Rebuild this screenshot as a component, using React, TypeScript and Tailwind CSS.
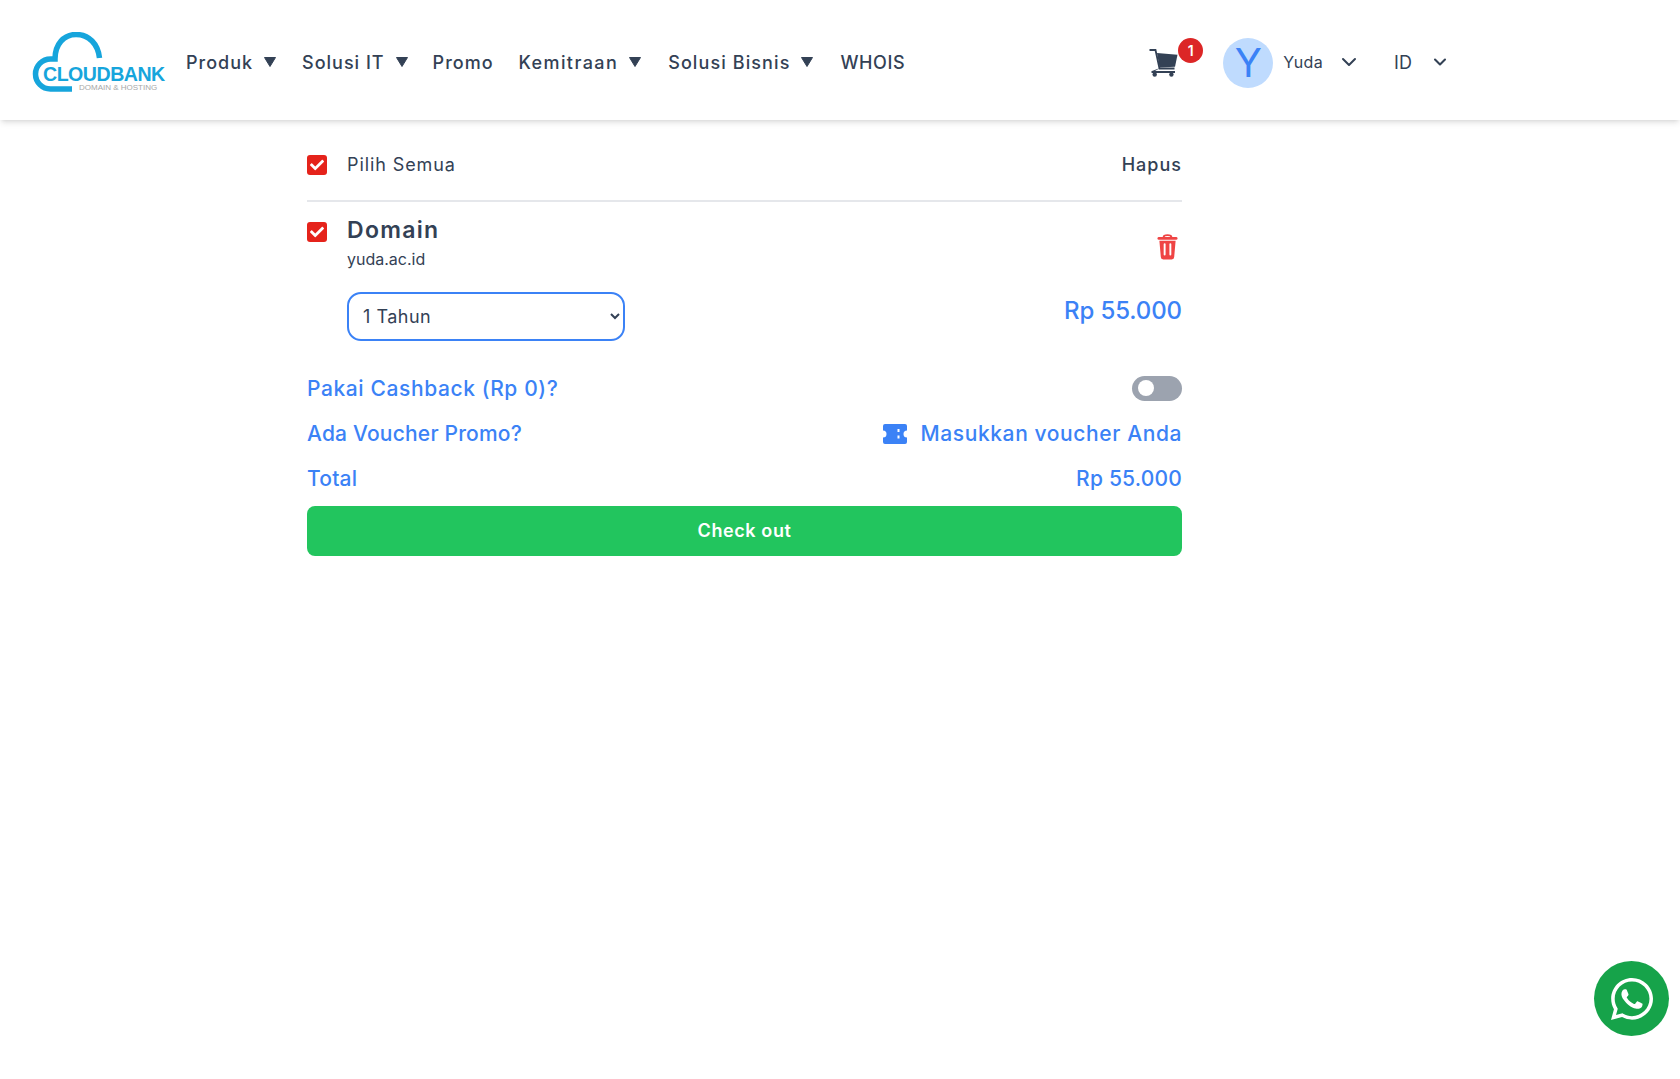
import { ChevronDown } from 'lucide-react';
import { FaWhatsapp, FaCheck } from 'react-icons/fa';

const navItems = [
  { label: 'Produk', caret: true, cls: 'tracking-[1px]' },
  { label: 'Solusi IT', caret: true, cls: 'ml-[26px] tracking-[1px]' },
  { label: 'Promo', caret: false, cls: 'ml-[25px] tracking-[1px]' },
  { label: 'Kemitraan', caret: true, cls: 'ml-[25px] tracking-[1.4px]' },
  { label: 'Solusi Bisnis', caret: true, cls: 'ml-[27px] tracking-[1.1px]' },
  { label: 'WHOIS', caret: false, cls: 'ml-[27px] tracking-[0.6px]' },
];

function Logo() {
  return (
    <div className="relative w-[134px] h-[60px] shrink-0">
      <svg viewBox="0 0 134 60" className="absolute inset-0 w-full h-full" fill="none">
        <path
          d="M40 57 H18.5 A15 15 0 0 1 18.5 27 H23 C23 12 32 2.5 44 2.5 C57 2.5 66 12 67.5 26"
          stroke="#16a5dc"
          strokeWidth="5.5"
        />
      </svg>
      <span className="absolute left-[11px] top-[31px] text-[19.6px] leading-[22px] font-bold text-[#16a5dc] tracking-[-0.5px] font-['Liberation_Sans',sans-serif] whitespace-nowrap">
        CLOUDBANK
      </span>
      <span className="absolute left-[47px] top-[51px] text-[8px] leading-[10px] text-[#a8a8a8] font-['Liberation_Sans',sans-serif] whitespace-nowrap">
        DOMAIN &amp; HOSTING
      </span>
    </div>
  );
}

function Caret() {
  return (
    <svg viewBox="0 0 12 10" className="w-3 h-[10px] ml-[11px] fill-[#334155]">
      <path d="M0.5 0.5 H11.5 L6 9.5 Z" stroke="#334155" strokeLinejoin="round" />
    </svg>
  );
}

function Cart() {
  return (
    <svg viewBox="0 0 29 29" className="w-[29px] h-[29px]" fill="#334155">
      <path d="M0.5 2 H6.5 L10.5 20.5 H25.5" fill="none" stroke="#334155" strokeWidth="1.8" />
      <path d="M8 5 L28.5 6.8 L26 18.8 L10.6 19.6 Z" />
      <path d="M2.5 23 H26 V25 H2.5 Z" />
      <path d="M11 20 L3 23 H6 Z" />
      <circle cx="5.7" cy="26.5" r="2.2" />
      <circle cx="22.4" cy="26.5" r="2.2" />
    </svg>
  );
}

function Checkbox() {
  return (
    <div className="w-5 h-5 rounded-[3px] bg-[#e5231b] flex items-center justify-center shrink-0">
      <FaCheck className="w-[14px] h-[14px] text-white" />
    </div>
  );
}

function Ticket() {
  return (
    <svg viewBox="0 0 24 20" className="w-6 h-5 fill-[#3b82f6] shrink-0">
      <path d="M2 0 H22 A2 2 0 0 1 24 2 V6.5 A3.5 3.5 0 0 0 24 13.5 V18 A2 2 0 0 1 22 20 H2 A2 2 0 0 1 0 18 V13.5 A3.5 3.5 0 0 0 0 6.5 V2 A2 2 0 0 1 2 0 Z" />
      <rect x="14.5" y="5" width="2" height="3" fill="#fff" />
      <rect x="14.5" y="11.5" width="2" height="3" fill="#fff" />
    </svg>
  );
}

function Trash() {
  return (
    <svg viewBox="0 0 22 28" className="w-[21px] h-[27px]">
      <path d="M7 4 C7 1.5 15 1.5 15 4" fill="none" stroke="#ef4444" strokeWidth="2" />
      <rect x="0.5" y="4" width="21" height="3" rx="1.5" fill="#ef4444" />
      <path d="M2.5 8 H19.5 L18 25 A2.5 2.5 0 0 1 15.5 27.5 H6.5 A2.5 2.5 0 0 1 4 25 Z" fill="#ef4444" />
      <rect x="7" y="10.5" width="2" height="13" rx="1" fill="#fff" />
      <rect x="13" y="10.5" width="2" height="13" rx="1" fill="#fff" />
    </svg>
  );
}

export default function App() {
  return (
    <div className="min-h-[1079px] bg-white font-['Inter',sans-serif] text-[#334155] relative">
      {/* Header */}
      <header className="h-[120px] bg-white shadow-md flex items-center pl-8 pt-[4px]">
        <Logo />
        <nav className="flex items-center ml-[20px] text-[18px] font-medium">
          {navItems.map((item) => (
            <div key={item.label} className={`flex items-center ${item.cls}`}>
              <span>{item.label}</span>
              {item.caret && <Caret />}
            </div>
          ))}
        </nav>

        <div className="relative ml-[244px] w-[29px] h-[29px]">
          <Cart />
          <span className="absolute -top-[10px] left-[29px] w-[25px] h-[25px] rounded-full bg-[#dc2626] text-white text-[14px] font-semibold flex items-center justify-center">
            1
          </span>
        </div>
        <div className="ml-[45px] mt-[2px] w-[50px] h-[50px] rounded-full bg-[#bfdbfe] text-[#3b82f6] text-[40px] flex items-center justify-center">
          Y
        </div>
        <span className="ml-[10px] text-[16px] tracking-[0.3px]">Yuda</span>
        <ChevronDown className="ml-[14px] w-[24px] h-[24px]" />
        <span className="ml-[33px] text-[18px] tracking-[0.3px]">ID</span>
        <ChevronDown className="ml-[18px] w-[20px] h-[20px]" strokeWidth={2.5} />
      </header>

      {/* Cart */}
      <main className="ml-[307px] w-[875px]">
        <div className="h-[82px] pt-[10px] flex items-center border-b-2 border-[#e5e7eb]">
          <Checkbox />
          <span className="ml-5 -mt-[2px] text-[18px] tracking-[0.9px]">Pilih Semua</span>
          <span className="ml-auto -mt-[2px] text-[18px] font-medium tracking-[1px]">Hapus</span>
        </div>

        <div className="flex mt-[20px]">
          <Checkbox />
          <div className="ml-5 flex-1 -mt-[7px]">
            <div className="flex items-center justify-between">
              <div>
                <div className="text-[23px] leading-[30px] font-semibold tracking-[1.3px]">Domain</div>
                <div className="mt-[2px] text-[16px] leading-6">yuda.ac.id</div>
              </div>
              <div className="mr-[4px] mt-[6px]">
                <Trash />
              </div>
            </div>
            <div className="flex items-start justify-between mt-[21px]">
              <select className="w-[278px] h-[49px] border-2 border-[#3b82f6] rounded-[14px] pl-[10px] pr-[7px] text-[18px] tracking-[0.5px] bg-white outline-none">
                <option>1 Tahun</option>
              </select>
              <span className="mt-[1px] text-[24px] leading-[36px] font-medium text-[#3b82f6] tracking-[-0.1px]">Rp 55.000</span>
            </div>
          </div>
        </div>

        <div className="flex items-center justify-between mt-[31px] h-[34px] text-[21px] font-medium text-[#3b82f6]">
          <span className="tracking-[0.6px]">Pakai Cashback (Rp 0)?</span>
          <div className="-mt-[2px] w-[50px] h-[25px] rounded-full bg-[#9ca3af] flex items-center pl-[6px]">
            <div className="w-[16px] h-[16px] rounded-full bg-white" />
          </div>
        </div>
        <div className="flex items-center justify-between mt-[11px] h-[34px] text-[21px] font-medium text-[#3b82f6]">
          <span className="tracking-[0.2px]">Ada Voucher Promo?</span>
          <span className="flex items-center gap-[14px] tracking-[0.6px]">
            <Ticket />
            Masukkan voucher Anda
          </span>
        </div>
        <div className="flex items-center justify-between mt-[11px] h-[34px] text-[21px] font-medium text-[#3b82f6] tracking-[0.2px]">
          <span>Total</span>
          <span>Rp 55.000</span>
        </div>

        <button className="mt-[10px] w-full h-[50px] rounded-lg bg-[#22c55e] text-white text-[18px] font-semibold tracking-[0.6px] pb-[2px]">
          Check out
        </button>
      </main>

      {/* WhatsApp */}
      <div className="absolute left-[1594px] top-[961px] w-[75px] h-[75px] rounded-full bg-[#16a34a] flex items-center justify-center">
        <FaWhatsapp className="w-[48px] h-[48px] text-white" />
      </div>
    </div>
  );
}
